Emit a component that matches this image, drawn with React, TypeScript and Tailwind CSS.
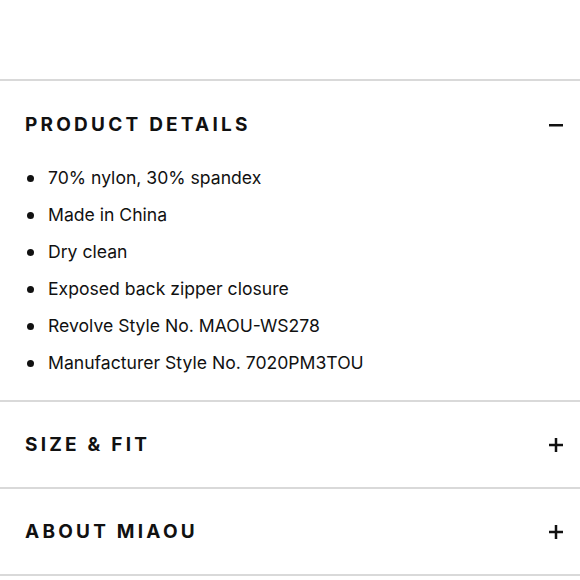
import React from 'react';

const FONT = { fontFamily: 'Inter, "Liberation Sans", sans-serif' };

const details = [
    '70% nylon, 30% spandex',
    'Made in China',
    'Dry clean',
    'Exposed back zipper closure',
    'Revolve Style No. MAOU-WS278',
    'Manufacturer Style No. 7020PM3TOU',
];

const Minus: React.FC = () => (
    <svg width="14" height="14" viewBox="0 0 14 14">
        <rect x="0" y="6" width="14" height="2.5" fill="#111" />
    </svg>
);

const Plus: React.FC = () => (
    <svg width="14" height="14" viewBox="0 0 14 14">
        <rect x="0" y="5.75" width="14" height="2.5" fill="#111" />
        <rect x="5.75" y="0" width="2.5" height="14" fill="#111" />
    </svg>
);

const Heading: React.FC<{ label: string }> = ({ label }) => (
    <h2 className="text-[19px] font-bold tracking-[0.17em] text-[#111] leading-[26px]">{label}</h2>
);

const App: React.FC = () => {
    return (
        <div className="w-[580px] h-[580px] bg-white overflow-hidden" style={FONT}>
            <div className="h-[79px]" />

            {/* product details - open */}
            <section className="border-t-2 border-[#d9d9d9]">
                <div className="flex items-center justify-between pl-[25px] pr-[17px] pt-[31px] pb-[22px]">
                    <Heading label="PRODUCT DETAILS" />
                    <Minus />
                </div>
                <ul className="pb-[18px]">
                    {details.map(d => (
                        <li key={d} className="flex items-center h-[37px] pl-[27px] text-[17.6px] text-[#111]">
                            <span className="w-[7px] h-[7px] rounded-full bg-[#111] mr-[14px]" />
                            {d}
                        </li>
                    ))}
                </ul>
            </section>

            <section className="border-t-2 border-[#d9d9d9]">
                <div className="flex items-center justify-between h-[85px] pl-[25px] pr-[17px]">
                    <Heading label="SIZE & FIT" />
                    <Plus />
                </div>
            </section>

            <section className="border-t-2 border-[#d9d9d9]">
                <div className="flex items-center justify-between h-[85px] pl-[25px] pr-[17px]">
                    <Heading label="ABOUT MIAOU" />
                    <Plus />
                </div>
            </section>

            <div className="border-t-2 border-[#d9d9d9]" />
        </div>
    );
};

export default App;
